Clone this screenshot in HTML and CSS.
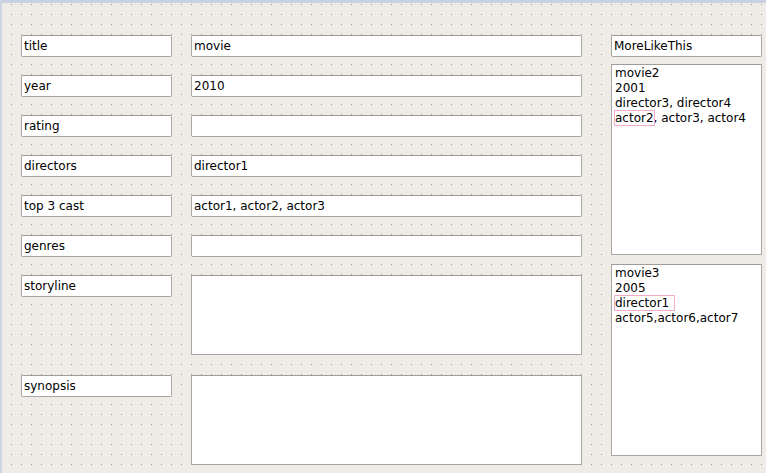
FILE: index.html
```html
<!DOCTYPE html>
<html>
<head>
<meta charset="utf-8">
<link rel="stylesheet" href="styles.css">
</head>
<body>
<div class="frame">
  <div class="form">
    <div class="grid">
      <div class="edit">title</div><div class="edit">movie</div>
      <div class="edit">year</div><div class="edit">2010</div>
      <div class="edit">rating</div><div class="edit"></div>
      <div class="edit">directors</div><div class="edit">director1</div>
      <div class="edit">top 3 cast</div><div class="edit">actor1, actor2, actor3</div>
      <div class="edit">genres</div><div class="edit"></div>
      <div class="edit">storyline</div><div class="area story"></div>
      <div class="edit">synopsis</div><div class="area synopsis"></div>
    </div>
    <div class="side">
      <div class="edit">MoreLikeThis</div>
      <div class="text box1">
        <div>movie2</div>
        <div>2001</div>
        <div>director3, director4</div>
        <div><span class="hl">actor2</span>, actor3, actor4</div>
      </div>
      <div class="text box2">
        <div>movie3</div>
        <div>2005</div>
        <div><span class="hl wide">director1</span></div>
        <div>actor5,actor6,actor7</div>
      </div>
    </div>
  </div>
</div>
</body>
</html>
```

FILE: styles.css
```css
html, body {
  margin: 0;
  padding: 0;
  width: 766px;
  height: 473px;
  overflow: hidden;
  background: #efebe7;
}

.frame {
  box-sizing: border-box;
  width: 766px;
  height: 473px;
  border-top: 3px solid #c8d2e4;
  border-left: 2px solid #cdd6e6;
  background-color: #efebe7;
  background-image: url("data:image/svg+xml,%3Csvg xmlns='http://www.w3.org/2000/svg' width='10' height='10'%3E%3Crect width='1' height='1' fill='%239d9a96'/%3E%3C/svg%3E");
  background-position: 9px 1px;
  font-family: "DejaVu Sans", sans-serif;
  font-size: 12px;
  color: #000;
}

.form {
  display: flex;
  padding: 32px 0 0 19px;
  gap: 29px;
}

.grid {
  display: grid;
  grid-template-columns: 151px 391px;
  grid-template-rows: 22px 22px 22px 22px 22px 22px 82px 90px;
  column-gap: 19px;
  row-gap: 18px;
}

.edit {
  box-sizing: border-box;
  height: 22px;
  background: #fff;
  border: 1px solid #aaa6a1;
  border-top-color: #a09c97;
  border-radius: 2px;
  padding-left: 2px;
  line-height: 20px;
  white-space: nowrap;
}

.area {
  box-sizing: border-box;
  background: #fff;
  border: 1px solid #aaa6a1;
  border-top-color: #a09c97;
  border-radius: 1px;
}

.story {
  height: 80px;
}

.synopsis {
  height: 90px;
}

.side {
  width: 151px;
  display: flex;
  flex-direction: column;
}

.text {
  box-sizing: border-box;
  background: #fff;
  border: 1px solid #aaa6a1;
  border-top-color: #a09c97;
  border-radius: 1px;
  padding: 1px 3px;
  line-height: 15px;
  white-space: nowrap;
}

.box1 {
  margin-top: 7px;
  height: 191px;
}

.box2 {
  margin-top: 9px;
  height: 192px;
}

.hl {
  outline: 1px solid #f5a9c9;
  outline-offset: 0;
}

.wide {
  padding-right: 5px;
}
```
